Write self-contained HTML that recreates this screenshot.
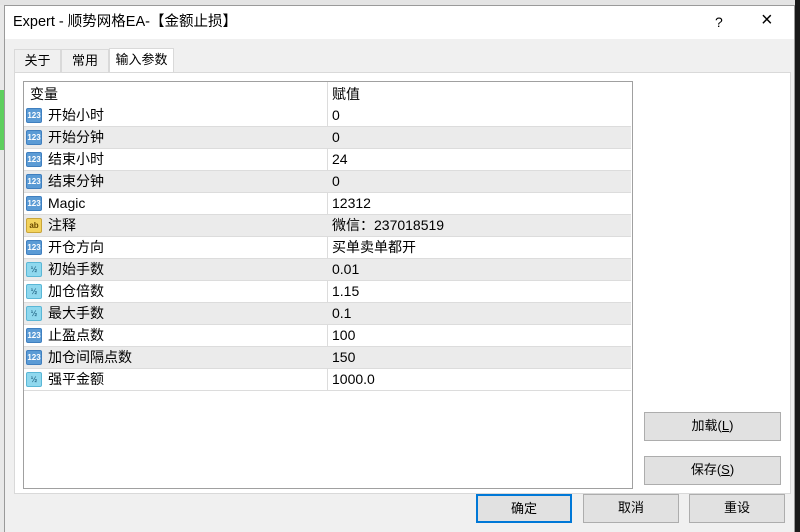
<!DOCTYPE html>
<html><head><meta charset="utf-8"><style>
*{margin:0;padding:0;box-sizing:border-box}
body{width:800px;height:532px;overflow:hidden;background:#e8e8e8;font-family:"Liberation Sans","Noto Sans CJK SC",sans-serif;font-size:13px;color:#000;position:relative;line-height:18px}
.abs{position:absolute}
#dlg{left:4px;top:5px;width:791px;height:527px;background:#f0f0f0;border:1px solid #9a9a9a;border-bottom:none}
#title{left:0;top:0;width:789px;height:33px;background:#fff}
.tab{top:43px;height:24px;line-height:22px;text-align:center;font-size:13px;border:1px solid #d9d9d9;border-bottom:none;background:#f0f0f0}
.btn{background:#e1e1e1;border:1px solid #adadad;text-align:center;line-height:26px;font-size:13px}
.row{position:absolute;left:0;width:607px;height:22px;border-bottom:1px solid #dcdcdc}
.row.g{background:#ebebeb}
.row span{position:absolute;top:0;height:21px;line-height:21px;font-size:14px}
.ic{position:absolute;left:2px;top:3px;width:16px;height:15px;border-radius:2px;font-size:8px;font-weight:bold;line-height:13px;text-align:center;font-style:normal}
.n{background:#5b9bd5;color:#fff;border:1px solid #3f7fbf}
.d{background:#8fd8ee;color:#2a6d8c;border:1px solid #5ab7d6}
.s{background:#f3d35d;color:#6b4a00;border:1px solid #c9a53a}
</style></head><body>
<div class="abs" style="left:0;top:0;width:800px;height:5px;background:#e4e4e4"></div>
<div class="abs" style="left:0;top:90px;width:4px;height:60px;background:#5ecf5e"></div>
<div class="abs" style="left:795px;top:0;width:5px;height:532px;background:#1a1a1a"></div>
<div id="dlg" class="abs">
 <div id="title" class="abs">
  <div class="abs" style="left:8px;top:7px;font-size:14.5px">Expert - 顺势网格EA-【金额止损】</div>
  <div class="abs" style="left:710px;top:7px;font-size:14px">?</div>
  <div class="abs" style="left:756px;top:5px;font-size:20px;font-weight:300">×</div>
 </div>
 <div class="abs tab" style="left:9px;width:47px">关于</div>
 <div class="abs tab" style="left:56px;width:48px">常用</div>
 <div class="abs tab" style="left:104px;width:65px;top:42px;height:25px;background:#fff">输入参数</div>
 <div class="abs" style="left:9px;top:66px;width:777px;height:422px;background:#fff;border:1px solid #d9d9d9"></div>
 <div class="abs" style="left:18px;top:75px;width:610px;height:408px;background:#fff;border:1px solid #a0a0a0">
  <div class="abs" style="left:303px;top:0;width:1px;height:308px;background:#dcdcdc"></div>
  <div class="abs" style="left:6px;top:0;line-height:24px;font-size:14px">变量</div>
  <div class="abs" style="left:308px;top:0;line-height:24px;font-size:14px">赋值</div>
  <div class="abs" style="left:0;top:23px;width:608px">
   <div class="row" style="top:0"><i class="ic n">123</i><span style="left:24px">开始小时</span><span style="left:308px">0</span></div>
   <div class="row g" style="top:22px"><i class="ic n">123</i><span style="left:24px">开始分钟</span><span style="left:308px">0</span></div>
   <div class="row" style="top:44px"><i class="ic n">123</i><span style="left:24px">结束小时</span><span style="left:308px">24</span></div>
   <div class="row g" style="top:66px"><i class="ic n">123</i><span style="left:24px">结束分钟</span><span style="left:308px">0</span></div>
   <div class="row" style="top:88px"><i class="ic n">123</i><span style="left:24px">Magic</span><span style="left:308px">12312</span></div>
   <div class="row g" style="top:110px"><i class="ic s">ab</i><span style="left:24px">注释</span><span style="left:308px">微信：237018519</span></div>
   <div class="row" style="top:132px"><i class="ic n">123</i><span style="left:24px">开仓方向</span><span style="left:308px">买单卖单都开</span></div>
   <div class="row g" style="top:154px"><i class="ic d">½</i><span style="left:24px">初始手数</span><span style="left:308px">0.01</span></div>
   <div class="row" style="top:176px"><i class="ic d">½</i><span style="left:24px">加仓倍数</span><span style="left:308px">1.15</span></div>
   <div class="row g" style="top:198px"><i class="ic d">½</i><span style="left:24px">最大手数</span><span style="left:308px">0.1</span></div>
   <div class="row" style="top:220px"><i class="ic n">123</i><span style="left:24px">止盈点数</span><span style="left:308px">100</span></div>
   <div class="row g" style="top:242px"><i class="ic n">123</i><span style="left:24px">加仓间隔点数</span><span style="left:308px">150</span></div>
   <div class="row" style="top:264px"><i class="ic d">½</i><span style="left:24px">强平金额</span><span style="left:308px">1000.0</span></div>
  </div>
 </div>
 <div class="abs btn" style="left:639px;top:406px;width:137px;height:29px">加载(<u>L</u>)</div>
 <div class="abs btn" style="left:639px;top:450px;width:137px;height:29px">保存(<u>S</u>)</div>
 <div class="abs btn" style="left:471px;top:488px;width:96px;height:29px;border:2px solid #0078d7;line-height:25px">确定</div>
 <div class="abs btn" style="left:578px;top:488px;width:96px;height:29px">取消</div>
 <div class="abs btn" style="left:684px;top:488px;width:96px;height:29px">重设</div>
</div>
</body></html>
